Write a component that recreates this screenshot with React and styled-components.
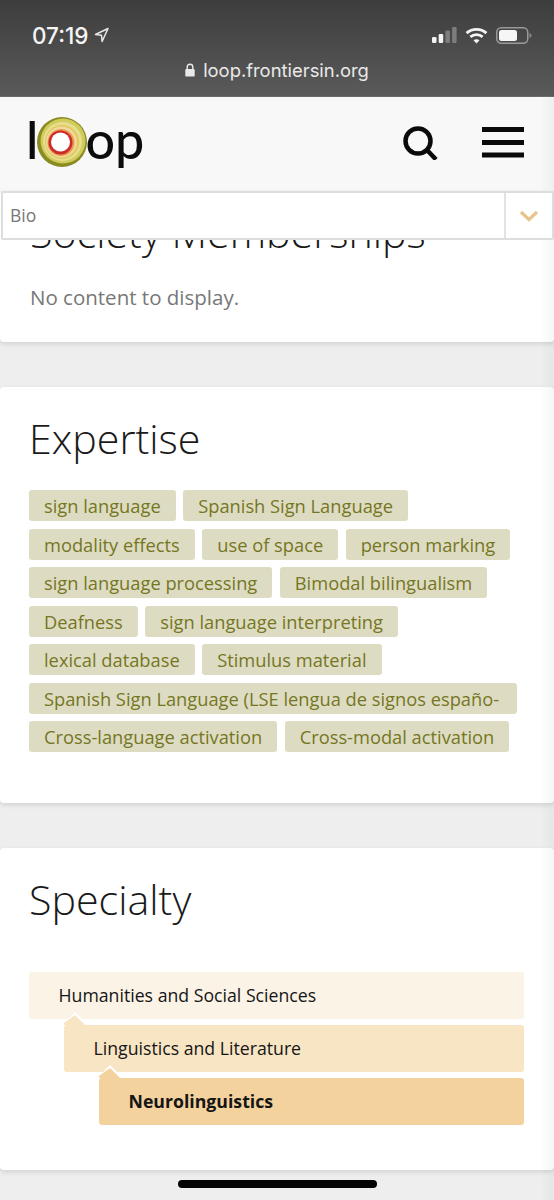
import React from "react";
import styled, { createGlobalStyle } from "styled-components";

const GlobalStyle = createGlobalStyle`
  html, body {
    margin: 0;
    padding: 0;
    background: #eeeeee;
  }
  * {
    box-sizing: border-box;
  }
`;

const Page = styled.div`
  position: relative;
  width: 554px;
  height: 1200px;
  overflow: hidden;
  background: #eeeeee;
  font-family: "Open Sans", "Liberation Sans", sans-serif;
`;

const EdgeShade = styled.div`
  position: absolute;
  top: 97px;
  right: 0;
  bottom: 0;
  width: 14px;
  pointer-events: none;
  background: linear-gradient(to right, rgba(0, 0, 0, 0), rgba(0, 0, 0, 0.035));
`;

const StatusBar = styled.div`
  height: 97px;
  padding: 20px 22px 0 32px;
  background: linear-gradient(to bottom, #3d3d3d, #5a5a5a);
  border-bottom: 1px solid #6b6b6b;
  color: #f4f4f4;
`;

const StatusRow = styled.div`
  display: flex;
  align-items: center;
  justify-content: space-between;
  height: 30px;
`;

const Clock = styled.div`
  display: flex;
  align-items: center;
  gap: 5px;
  font-family: Inter, Roboto, sans-serif;
  font-size: 22.5px;
  font-weight: 500;
`;

const StatusIcons = styled.div`
  display: flex;
  align-items: center;
  gap: 8px;
`;

const UrlRow = styled.div`
  display: flex;
  align-items: center;
  justify-content: center;
  gap: 8px;
  margin: 9px 10px 0 0;
  font-family: Inter, Roboto, sans-serif;
  font-size: 18.4px;
  color: #e9e9e9;
`;

const Header = styled.header`
  display: flex;
  align-items: center;
  justify-content: space-between;
  height: 94px;
  padding: 0 30px 0 26px;
  background: #f8f8f8;
`;

const Logo = styled.div`
  display: flex;
  align-items: center;
  height: 60px;
  margin-top: -8px;
  color: #0c0c0c;
  font-family: Lato, sans-serif;
  font-size: 52px;
  font-weight: 500;
  line-height: 60px;
`;

const LogoLetter = styled.span`
  display: block;
  margin-top: -2px;
`;

const HeaderTools = styled.div`
  display: flex;
  align-items: center;
  gap: 44px;
  margin-top: -3px;
`;

const Main = styled.main`
  position: relative;
  display: flex;
  flex-direction: column;
  gap: 45px;
`;

const SectionPicker = styled.div`
  position: absolute;
  top: 0;
  left: 1px;
  right: 0;
  z-index: 2;
  display: flex;
  height: 49px;
  background: #ffffff;
  border: 2px solid #dddddd;
  border-radius: 2px;
`;

const PickerValue = styled.div`
  flex: 1;
  padding-left: 7px;
  font-size: 17.5px;
  line-height: 45px;
  color: #777777;
`;

const PickerCaret = styled.div`
  display: flex;
  align-items: center;
  justify-content: center;
  width: 48px;
  border-left: 2px solid #e2e2e2;
`;

const Card = styled.section`
  padding: ${(p) => p.$padding};
  background: #ffffff;
  border-radius: 4px;
  box-shadow: 0 2px 5px rgba(0, 0, 0, 0.12);
`;

const Title = styled.h2`
  margin: 0;
  font-size: 41.2px;
  font-weight: 300;
  line-height: 46px;
  color: #1a1a1a;
`;

const Empty = styled.p`
  margin: 29px 0 2px;
  font-size: 20.5px;
  line-height: 26px;
  color: #777777;
`;

const TagList = styled.div`
  display: flex;
  flex-wrap: wrap;
  gap: 7.5px;
  margin-top: 29px;
`;

const Tag = styled.span`
  height: 31px;
  padding: 0 ${(p) => (p.$wrapped ? "17.5px" : "15px")} 0 15px;
  background: #dddcc3;
  border-radius: 3px;
  font-size: 18.3px;
  font-weight: 500;
  line-height: 31px;
  white-space: nowrap;
  color: #76761f;
`;

const Levels = styled.div`
  display: flex;
  flex-direction: column;
  gap: 6px;
  margin-top: 50px;
`;

const Level = styled.div`
  position: relative;
  height: 47px;
  margin-left: ${(p) => p.$indent}px;
  padding-left: 29.5px;
  background: ${(p) => p.$bg};
  border-radius: 3px;
  font-size: 17.7px;
  font-weight: ${(p) => (p.$current ? 700 : 400)};
  line-height: 47px;
  color: #151515;

  &::before,
  &::after {
    content: "";
    position: absolute;
    display: ${(p) => (p.$notch ? "block" : "none")};
  }
  &::before {
    top: -13px;
    left: 0;
    width: 24px;
    height: 13px;
    background: #ffffff;
    clip-path: polygon(0 100%, 0 85%, 11px 0, 24px 100%);
  }
  &::after {
    top: -10px;
    left: 0;
    width: 21px;
    height: 10px;
    background: ${(p) => p.$bg};
    clip-path: polygon(0 100%, 0 80%, 11px 0, 21px 100%);
  }
`;

const HomeBar = styled.div`
  position: absolute;
  left: 178px;
  bottom: 12px;
  width: 199px;
  height: 8px;
  background: #050505;
  border-radius: 4px;
`;

const LocationIcon = () => (
  <svg width="15" height="16" viewBox="0 0 15 16" fill="none" stroke="#e8e8e8" strokeWidth="1.5">
    <path d="M14 1.5 1.5 7.5l6 .8.6 6.2z" strokeLinejoin="round" />
  </svg>
);

const SignalIcon = () => (
  <svg width="25" height="16" viewBox="0 0 25 16">
    <rect x="0" y="10" width="4.5" height="6" rx="1.2" fill="#f4f4f4" />
    <rect x="6.7" y="7" width="4.5" height="9" rx="1.2" fill="#f4f4f4" />
    <rect x="13.4" y="3.5" width="4.5" height="12.5" rx="1.2" fill="#7d7d7d" />
    <rect x="20.1" y="0" width="4.5" height="16" rx="1.2" fill="#7d7d7d" />
  </svg>
);

const WifiIcon = () => (
  <svg width="23" height="17" viewBox="0 0 24 18" fill="none" stroke="#f4f4f4" strokeWidth="3">
    <path d="M1.5 6.5c6-5.4 15-5.4 21 0" />
    <path d="M5.5 10.5c3.8-3.2 9.2-3.2 13 0" />
    <path d="M12 17.5 8.8 14c1.9-1.4 4.5-1.4 6.4 0z" fill="#f4f4f4" stroke="none" />
  </svg>
);

const BatteryIcon = () => (
  <svg width="36" height="17" viewBox="0 0 36 17">
    <rect x="0.75" y="0.75" width="31" height="15.5" rx="4.5" fill="none" stroke="#9a9a9a" strokeWidth="1.5" />
    <rect x="3" y="3" width="18" height="11" rx="2.5" fill="#f6f6f6" />
    <path d="M33.5 6c1.4.4 2 1.3 2 2.5s-.6 2.1-2 2.5z" fill="#8a8a8a" />
  </svg>
);

const LockIcon = () => (
  <svg width="10" height="14" viewBox="0 0 10 14" fill="none">
    <path d="M2.2 6.5V4a2.8 2.8 0 0 1 5.6 0v2.5" stroke="#e9e9e9" strokeWidth="1.4" />
    <rect x="0.3" y="6" width="9.4" height="7.6" rx="1.2" fill="#e9e9e9" />
  </svg>
);

const LogoRings = () => (
  <svg width="50" height="50" viewBox="0 0 50 50" style={{ margin: "3px -2px 0 -1px" }}>
    <circle cx="25" cy="25" r="25" fill="#8a8b22" />
    <circle cx="26" cy="24" r="22.5" fill="#cfcc5c" />
    <circle cx="25.5" cy="24.5" r="19.5" fill="#e8dd8e" />
    <circle cx="25" cy="25" r="17" fill="#dfc95a" />
    <circle cx="24.5" cy="25" r="15.5" fill="#f0d9a0" />
    <circle cx="24" cy="25.5" r="13.5" fill="#eb9a4a" />
    <circle cx="23.5" cy="25.5" r="12" fill="#cc2b2b" />
    <circle cx="23.5" cy="25" r="9.5" fill="#ffffff" />
  </svg>
);

const SearchIcon = () => (
  <svg width="35" height="34" viewBox="0 0 35 34" fill="none" stroke="#0a0a0a" strokeWidth="4.5">
    <circle cx="15" cy="15" r="12.5" />
    <path d="m24 24 9 9.5" />
  </svg>
);

const MenuIcon = () => (
  <svg width="42" height="32" viewBox="0 0 42 32" fill="#0a0a0a">
    <rect y="0" width="42" height="5" />
    <rect y="13" width="42" height="5" />
    <rect y="25.5" width="42" height="5" />
  </svg>
);

const CaretIcon = () => (
  <svg width="20" height="12" viewBox="0 0 20 12" fill="none" stroke="#e8c48c" strokeWidth="3.2">
    <path d="m2 2 8 7.5L18 2" />
  </svg>
);

const expertise = [
  { label: "sign language" },
  { label: "Spanish Sign Language" },
  { label: "modality effects" },
  { label: "use of space" },
  { label: "person marking" },
  { label: "sign language processing" },
  { label: "Bimodal bilingualism" },
  { label: "Deafness" },
  { label: "sign language interpreting" },
  { label: "lexical database" },
  { label: "Stimulus material" },
  { label: "Spanish Sign Language (LSE lengua de signos españo-", wrapped: true },
  { label: "Cross-language activation" },
  { label: "Cross-modal activation" },
];

const specialty = [
  { name: "Humanities and Social Sciences", indent: 0, bg: "#fbf3e6" },
  { name: "Linguistics and Literature", indent: 35, bg: "#f7e5c4", notch: true },
  { name: "Neurolinguistics", indent: 70, bg: "#f4d29e", notch: true, current: true },
];

export default function App() {
  return (
    <Page>
      <GlobalStyle />
      <StatusBar>
        <StatusRow>
          <Clock>
            07:19 <LocationIcon />
          </Clock>
          <StatusIcons>
            <SignalIcon />
            <WifiIcon />
            <BatteryIcon />
          </StatusIcons>
        </StatusRow>
        <UrlRow>
          <LockIcon />
          loop.frontiersin.org
        </UrlRow>
      </StatusBar>

      <Header>
        <Logo>
          <LogoLetter>l</LogoLetter>
          <LogoRings />
          <LogoLetter>op</LogoLetter>
        </Logo>
        <HeaderTools>
          <SearchIcon />
          <MenuIcon />
        </HeaderTools>
      </Header>

      <Main>
        <SectionPicker>
          <PickerValue>Bio</PickerValue>
          <PickerCaret>
            <CaretIcon />
          </PickerCaret>
        </SectionPicker>

        <Card $padding="18px 30px 30px">
          <Title>Society Memberships</Title>
          <Empty>No content to display.</Empty>
        </Card>

        <Card $padding="28px 29px 51px">
          <Title>Expertise</Title>
          <TagList>
            {expertise.map((tag) => (
              <Tag key={tag.label} $wrapped={tag.wrapped}>
                {tag.label}
              </Tag>
            ))}
          </TagList>
        </Card>

        <Card $padding="28px 30px 45px 29px">
          <Title>Specialty</Title>
          <Levels>
            {specialty.map((level) => (
              <Level
                key={level.name}
                $indent={level.indent}
                $bg={level.bg}
                $notch={level.notch}
                $current={level.current}
              >
                {level.name}
              </Level>
            ))}
          </Levels>
        </Card>
      </Main>

      <EdgeShade />
      <HomeBar />
    </Page>
  );
}
